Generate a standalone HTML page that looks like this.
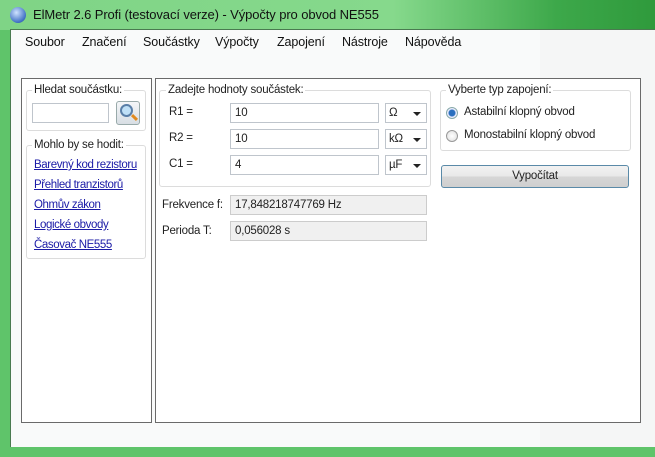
<!DOCTYPE html>
<html><head><meta charset="utf-8"><style>
*{margin:0;padding:0;box-sizing:border-box}
body{width:655px;height:457px;overflow:hidden;position:relative;font-family:"Liberation Sans",sans-serif;font-size:11.5px;letter-spacing:-0.2px;color:#222;background:#5fc46a}
.a{position:absolute}
#title{left:0;top:0;width:655px;height:30px;background:linear-gradient(90deg,#7fd486 0%,#86d98c 60%,#3da84a 85%,#2f9a3c 100%)}
#client{left:10px;top:29px;width:645px;height:418px;background:#f9fafa;border-top:1px solid #4a7a50;border-left:1px solid #4a7a50}
.menu{top:35px;font-size:12.5px;color:#111;letter-spacing:-0.1px}
.panel{border:1px solid #6a6a6a;background:#fff}
.gb{border:1px solid #dcdcdc;border-radius:3px}
.lg{background:#fff;padding:0 2px}
.inp{border:1px solid #bfc5cc;background:#fff;padding:3px 4px;height:20px}
.ro{border:1px solid #ccc;background:#f0f0f0;padding:3px 4px;height:20px}
.lnk{color:#1a1aa6;text-decoration:underline;left:34px;letter-spacing:-0.4px}
.cb{border:1px solid #bfc5cc;background:#fff;padding:3px 3px;height:20px;width:42px}
.cb:after{content:"";position:absolute;right:5px;top:8px;border-left:4px solid transparent;border-right:4px solid transparent;border-top:4px solid #222}
</style></head><body>
<div id="title" class="a"></div>
<div class="a" style="left:10px;top:7px;width:16px;height:16px;border-radius:50%;background:radial-gradient(circle at 40% 35%,#cfe3ff,#3f6fc4 70%,#29457f)"></div>
<div class="a" style="left:33px;top:7px;font-size:13px;color:#111;letter-spacing:-0.1px">ElMetr 2.6 Profi (testovací verze) - Výpočty pro obvod NE555</div>
<div id="client" class="a"></div>
<div class="a" style="left:540px;top:30px;width:115px;height:417px;background:#f2f4f4;opacity:.6"></div>
<div class="a menu" style="left:25px">Soubor</div>
<div class="a menu" style="left:82px">Značení</div>
<div class="a menu" style="left:143px">Součástky</div>
<div class="a menu" style="left:215px">Výpočty</div>
<div class="a menu" style="left:277px">Zapojení</div>
<div class="a menu" style="left:342px">Nástroje</div>
<div class="a menu" style="left:405px">Nápověda</div>

<div class="a panel" style="left:21px;top:78px;width:131px;height:345px"></div>
<div class="a gb" style="left:26px;top:90px;width:120px;height:41px"></div>
<div class="a lg" style="left:32px;top:84px">Hledat součástku:</div>
<div class="a inp" style="left:32px;top:103px;width:77px"></div>
<div class="a" style="left:116px;top:101px;width:24px;height:24px;border:1px solid #9aa;border-radius:3px;background:linear-gradient(#f4f6f8,#d8dee4)"></div>
<div class="a" style="left:120px;top:104px;width:13px;height:13px;border-radius:50%;border:2px solid #5a7fa8;background:#bfe0f7"></div>
<div class="a" style="left:131px;top:116px;width:7px;height:3px;background:#e08a20;transform:rotate(45deg)"></div>
<div class="a gb" style="left:26px;top:145px;width:120px;height:114px"></div>
<div class="a lg" style="left:32px;top:139px">Mohlo by se hodit:</div>
<div class="a lnk" style="top:159px">Barevný kod rezistoru</div>
<div class="a lnk" style="top:179px">Přehled tranzistorů</div>
<div class="a lnk" style="top:199px">Ohmův zákon</div>
<div class="a lnk" style="top:219px">Logické obvody</div>
<div class="a lnk" style="top:239px">Časovač NE555</div>

<div class="a panel" style="left:155px;top:78px;width:486px;height:345px"></div>
<div class="a gb" style="left:159px;top:90px;width:272px;height:97px"></div>
<div class="a lg" style="left:166px;top:84px">Zadejte hodnoty součástek:</div>
<div class="a" style="left:169px;top:106px">R1 =</div>
<div class="a" style="left:169px;top:132px">R2 =</div>
<div class="a" style="left:169px;top:158px">C1 =</div>
<div class="a inp" style="left:230px;top:103px;width:149px">10</div>
<div class="a inp" style="left:230px;top:129px;width:149px">10</div>
<div class="a inp" style="left:230px;top:155px;width:149px">4</div>
<div class="a cb" style="left:385px;top:103px">Ω</div>
<div class="a cb" style="left:385px;top:129px">kΩ</div>
<div class="a cb" style="left:385px;top:155px">µF</div>
<div class="a" style="left:162px;top:199px">Frekvence f:</div>
<div class="a ro" style="left:230px;top:195px;width:197px">17,848218747769 Hz</div>
<div class="a" style="left:162px;top:225px">Perioda T:</div>
<div class="a ro" style="left:230px;top:221px;width:197px">0,056028 s</div>

<div class="a gb" style="left:440px;top:90px;width:191px;height:61px;background:#fff"></div>
<div class="a lg" style="left:446px;top:84px">Vyberte typ zapojení:</div>
<div class="a" style="left:446px;top:107px;width:12px;height:12px;border-radius:50%;border:1px solid #8aa;background:radial-gradient(circle,#2a6fbf 0 3px,#eef 4px)"></div>
<div class="a" style="left:464px;top:106px">Astabilní klopný obvod</div>
<div class="a" style="left:446px;top:130px;width:12px;height:12px;border-radius:50%;border:1px solid #999;background:radial-gradient(circle,#fff,#ddd)"></div>
<div class="a" style="left:464px;top:129px">Monostabilní klopný obvod</div>
<div class="a" style="left:441px;top:165px;width:188px;height:23px;border:1px solid #5a8aa8;border-radius:3px;background:linear-gradient(#f2f2f2 0%,#e8e8e8 50%,#d6d6d6 51%,#cfcfcf);text-align:center;line-height:21px">Vypočítat</div>
</body></html>
